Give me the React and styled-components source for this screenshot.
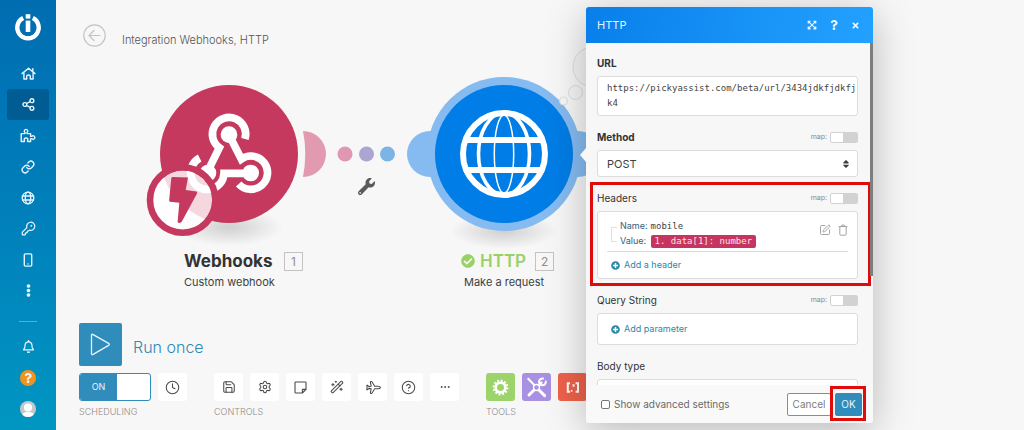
import React, { useState } from 'react';
import styled, { createGlobalStyle } from 'styled-components';
import {
  Link as LinkIcon, KeyRound, Clock, Save, Settings,
  WandSparkles, Plane, CircleQuestionMark, Ellipsis, SquarePen,
} from 'lucide-react';
import {
  FaRegBell, FaQuestion, FaTimes, FaExpandArrowsAlt, FaSort, FaPlusCircle,
  FaCheckCircle, FaWrench, FaEllipsisV,
} from 'react-icons/fa';

const GlobalStyle = createGlobalStyle`
  * { box-sizing: border-box; }
  body {
    margin: 0;
    background: #f7f7f7;
    color: #3c3f42;
    font-family: Inter, "Liberation Sans", sans-serif;
    font-size: 10px;
  }
  button, input, select, textarea { font: inherit; color: inherit; margin: 0; }
  button { border: 0; padding: 0; background: none; cursor: pointer; }
  svg { display: block; flex: none; }
`;

const Page = styled.div`
  display: flex;
  min-height: 100vh;
  overflow: hidden;
`;

/* ---------- Sidebar ---------- */
const Sidebar = styled.aside`
  flex: none;
  width: 56px;
  display: flex;
  flex-direction: column;
  align-items: center;
  padding-top: 13px;
  background: linear-gradient(#006db1, #0080bb 50%, #0096c2);
  color: #fff;
`;
const Logo = styled.a`
  color: inherit;
  margin-bottom: 17px;
`;
const Nav = styled.nav`
  display: flex;
  flex-direction: column;
`;
const NavItem = styled.a`
  display: flex;
  align-items: center;
  justify-content: center;
  width: 42px;
  height: 31px;
  border-radius: 3px;
  color: #e6f6ff;
  background: ${(p) => (p.$active ? '#005c93' : 'none')};
`;
const Divider = styled.hr`
  width: 18px;
  height: 1px;
  margin: 15px 0 9px;
  border: 0;
  background: #4fb0d6;
`;
const Disc = styled.span`
  display: flex;
  align-items: center;
  justify-content: center;
  width: 16px;
  height: 16px;
  border-radius: 50%;
  overflow: hidden;
  background: ${(p) => p.$color};
`;

/* ---------- Scenario canvas ---------- */
const Main = styled.main`
  position: relative;
  flex: 1;
  min-width: 0;
  display: flex;
  flex-direction: column;
`;
const TopBar = styled.header`
  display: flex;
  align-items: center;
  gap: 16px;
  height: 70px;
  padding-left: 27px;
`;
const BackButton = styled.button`
  display: flex;
  color: #c4c4c4;
`;
const ScenarioName = styled.h1`
  margin: 9px 0 0;
  font-size: 11px;
  line-height: 14px;
  font-weight: 300;
  color: #555;
`;
const Stage = styled.section`
  position: relative;
  height: 253px;
`;
const Drawing = styled.svg`
  position: absolute;
  left: 0;
  top: -70px;
`;
const NodeLabel = styled.div`
  position: absolute;
  left: ${(p) => p.$x}px;
  top: 181px;
  display: grid;
  grid-template-columns: auto auto;
  column-gap: 9px;
  row-gap: 4px;
  align-items: center;
  justify-items: start;
`;
const NodeName = styled.h2`
  display: flex;
  align-items: center;
  gap: 5px;
  margin: 0;
  font-size: 17px;
  line-height: 20px;
  font-weight: ${(p) => (p.$done ? 600 : 700)};
  color: ${(p) => (p.$done ? '#9ad167' : '#333')};
`;
const NodeNumber = styled.span`
  width: 19px;
  height: 19px;
  border: 1px solid #c3c3c3;
  font-size: 12px;
  line-height: 17px;
  text-align: center;
  color: #8e8e8e;
`;
const NodeKind = styled.p`
  margin: 0;
  font-size: 11px;
  line-height: 14px;
  white-space: nowrap;
  padding-left: ${(p) => (p.$wide ? '3px' : '0')};
  grid-column: ${(p) => (p.$wide ? '1 / 3' : '1')};
`;
const WrenchButton = styled.button`
  position: absolute;
  left: 302px;
  top: 108px;
  color: #5a5a5a;
`;

/* ---------- Bottom toolbar ---------- */
const Toolbar = styled.section`
  padding-left: 23px;
`;
const RunRow = styled.button`
  display: flex;
  align-items: center;
  gap: 11px;
  margin-bottom: 7px;
  font-size: 16px;
  line-height: 20px;
  font-weight: 300;
  color: #3089b5;
`;
const RunIcon = styled.span`
  display: flex;
  align-items: center;
  justify-content: center;
  width: 43px;
  height: 43px;
  border-radius: 2px;
  background: #2f8cbb;
`;
const RunText = styled.span`
  padding-top: 4px;
`;
const Groups = styled.div`
  display: flex;
  gap: 27px;
`;
const Group = styled.div`
  display: flex;
  flex-direction: column;
  gap: 5px;
`;
const GroupRow = styled.div`
  display: flex;
  gap: 7px;
`;
const GroupName = styled.span`
  font-size: 9px;
  line-height: 12px;
  font-weight: 300;
  color: #8b8b8b;
`;
const ToolButton = styled.button`
  display: flex;
  align-items: center;
  justify-content: center;
  width: 29px;
  height: 28px;
  border-radius: 3px;
  background: ${(p) => p.$color || '#fff'};
  color: ${(p) => (p.$color ? '#fff' : '#4a4a4a')};
`;
const Schedule = styled.button`
  display: flex;
  width: 72px;
  height: 28px;
  border: 1px solid #2f8cbb;
  border-radius: 3px;
  overflow: hidden;
  background: #fff;
`;
const ScheduleOn = styled.span`
  width: 37px;
  height: 100%;
  font-size: 9px;
  line-height: 26px;
  text-align: center;
  background: #2f8cbb;
  color: #e9f5fb;
`;

/* ---------- Module settings panel ---------- */
const Panel = styled.section`
  position: absolute;
  left: 530px;
  top: 7px;
  bottom: 7px;
  width: 287px;
  display: flex;
  flex-direction: column;
  border-radius: 3px;
  background: #f7f7f7;
  box-shadow: 0 8px 40px rgba(0, 0, 0, 0.26);
`;
const Pointer = styled.svg`
  position: absolute;
  left: -6px;
  top: 141px;
`;
const PanelHeader = styled.header`
  display: flex;
  align-items: center;
  flex: none;
  height: 36px;
  padding: 0 13px 0 11px;
  border-radius: 3px 3px 0 0;
  background: linear-gradient(100deg, #087fea, #23a1ff);
  color: #e8f5ff;
`;
const PanelTitle = styled.h2`
  flex: 1;
  margin: 0;
  font-size: 11px;
  line-height: 14px;
  font-weight: 400;
`;
const HeaderButtons = styled.div`
  display: flex;
  align-items: center;
  gap: 12px;
`;
const PanelBody = styled.div`
  position: relative;
  flex: 1 1 0;
  min-height: 0;
  display: flex;
  flex-direction: column;
  gap: 13px;
  padding: 12px 15px 0 11px;
  overflow: hidden;
`;
const ScrollThumb = styled.div`
  position: absolute;
  top: 0;
  right: 0;
  width: 3px;
  height: 68%;
  background: #7e7e7e;
`;
const Field = styled.div`
  position: relative;
  flex: none;
`;
const FieldHead = styled.div`
  display: flex;
  align-items: center;
  justify-content: space-between;
  height: 16px;
  margin-bottom: 5px;
`;
const FieldLabel = styled.label`
  font-size: 10px;
  line-height: 16px;
  font-weight: ${(p) => (p.$required ? 700 : 400)};
  color: #333;
`;
const MapLabel = styled.label`
  display: flex;
  align-items: center;
  gap: 3px;
  font-size: 7px;
  line-height: 12px;
  color: #8a8a8a;
`;
const MapSwitch = styled.input`
  appearance: none;
  width: 28px;
  height: 11px;
  border: 1px solid #d2d2d2;
  border-radius: 2px;
  background: linear-gradient(90deg, #fff 12px, #d2d2d2 12px);
`;
const UrlInput = styled.textarea`
  display: block;
  width: 100%;
  height: 40px;
  padding: 4px 0 4px 9px;
  border: 1px solid #dcdcdc;
  border-radius: 3px;
  outline: 0;
  resize: none;
  overflow: hidden;
  background: #fff;
  color: #444;
  font-family: "DejaVu Sans Mono", monospace;
  font-size: 9px;
  line-height: 15px;
  word-break: break-all;
`;
const SelectWrap = styled.div`
  display: grid;
  align-items: center;
  & > * { grid-area: 1 / 1; }
  & > svg { justify-self: end; margin-right: 7px; pointer-events: none; }
`;
const Select = styled.select`
  appearance: none;
  width: 100%;
  height: 27px;
  padding: 0 9px;
  border: 1px solid #dcdcdc;
  border-radius: 3px;
  background: #fff;
  font-size: 11px;
  line-height: 16px;
`;
const Box = styled.div`
  padding: ${(p) => (p.$list ? '7px 9px 0' : '8px 9px')};
  border: 1px solid #dcdcdc;
  border-radius: 3px;
  background: #fff;
`;
const HeaderItem = styled.div`
  display: flex;
  align-items: center;
  padding-bottom: 2px;
  border-bottom: 1px solid #dcdcdc;
`;
const Bracket = styled.span`
  width: 6px;
  height: 15px;
  margin: 0 3px 0 4px;
  border: 1px solid #e0e0e0;
  border-right: 0;
`;
const Pairs = styled.dl`
  flex: 1;
  display: grid;
  grid-template-columns: auto 1fr;
  grid-auto-rows: 15px;
  column-gap: 3px;
  margin: 0;
  font-size: 9px;
  line-height: 14px;
`;
const PairName = styled.dt`
  color: #35607a;
`;
const PairValue = styled.dd`
  margin: 0;
  font-family: "DejaVu Sans Mono", monospace;
`;
const Token = styled.span`
  display: inline-block;
  padding: 0 4px;
  border-radius: 2px;
  background: #c5355f;
  color: #fbe3ea;
  line-height: 13px;
`;
const ItemActions = styled.div`
  display: flex;
  align-items: center;
  gap: 7px;
  padding-bottom: 8px;
  color: #a4a4a4;
`;
const AddButton = styled.button`
  display: flex;
  align-items: center;
  gap: 4px;
  height: ${(p) => (p.$list ? '26px' : '14px')};
  padding-left: 4px;
  font-size: 9px;
  line-height: 14px;
  color: #2c87ab;
`;
const PanelFooter = styled.footer`
  display: flex;
  align-items: center;
  justify-content: space-between;
  flex: none;
  height: 38px;
  padding: 0 11px 0 15px;
  border-radius: 0 0 3px 3px;
  background: #f9f9f9;
`;
const Advanced = styled.label`
  display: flex;
  align-items: center;
  gap: 4px;
  font-size: 10px;
  line-height: 14px;
  color: #6a6a6a;
`;
const Tick = styled.input`
  appearance: none;
  width: 9px;
  height: 9px;
  border: 1px solid #777;
  border-radius: 2px;
  background: #fff;
`;
const FooterButtons = styled.div`
  display: flex;
  gap: 4px;
`;
const FooterButton = styled.button`
  width: ${(p) => (p.$primary ? '27px' : '44px')};
  height: 23px;
  border: 1px solid ${(p) => (p.$primary ? '#2f8cbb' : '#8c8c8c')};
  border-radius: 2px;
  background: ${(p) => (p.$primary ? '#2f8cbb' : '#fff')};
  color: ${(p) => (p.$primary ? '#e9f5fb' : '#7c7c7c')};
  font-size: 10px;
  line-height: 14px;
`;
const OkSlot = styled.div`
  position: relative;
`;
const Highlight = styled.div`
  position: absolute;
  inset: ${(p) => p.$inset};
  border: 3px solid #e00b0b;
  pointer-events: none;
`;

/* ---------- Icons ---------- */
const stroke = { fill: 'none', stroke: 'currentColor', strokeLinecap: 'round', strokeLinejoin: 'round' };

const LogoIcon = () => (
  <svg width="28" height="28" viewBox="0 0 28 28" fill="none" stroke="#fff">
    <path d="M9.2 5 A10.7 10.7 0 1 0 18.8 5" strokeWidth="4.4" />
    <path d="M14 7.6 V19" strokeWidth="4.6" />
    <path d="M14 1.2 V5.6" strokeWidth="4.6" />
  </svg>
);
const HomeIcon = () => (
  <svg width="15" height="13" viewBox="0 0 15 13" {...stroke} strokeWidth="1.4">
    <path d="M1 6.6 L7.5 1.2 L14 6.6 M11.8 1.6 V4.4" />
    <path d="M2.9 6 V12 H5.7 V9 Q5.7 8 7.5 8 Q9.3 8 9.3 9 V12 H12.1 V6" />
  </svg>
);
const ShareIcon = () => (
  <svg width="13" height="13" viewBox="0 0 13 13" {...stroke} strokeWidth="1.4">
    <circle cx="2.900" cy="6.500" r="1.900" />
    <circle cx="9.900" cy="2.700" r="1.900" />
    <circle cx="9.900" cy="10.300" r="1.900" />
    <path d="M4.7 5.5 L8.1 3.7 M4.7 7.5 L8.1 9.3" />
  </svg>
);
const PuzzleIcon = () => (
  <svg width="16" height="15" viewBox="0 0 16 15" {...stroke} strokeWidth="1.4">
    <path d="M1.2 13.5 V5.6 H5 V4.6 C3.6 3.4 4.4 1.4 6 1.4 C7.6 1.4 8.4 3.4 7 4.600 V5.6 H10.6 V8.4 H11.8 C12.8 7 14.800 7.800 14.800 9.500 C14.800 11.200 12.800 12 11.800 10.600 H10.600 V13.500 H7.600 V12.200 C8.400 10.800 7.200 10 6 10 C4.800 10 3.600 10.800 4.400 12.200 V13.500 Z" />
  </svg>
);
const GlobeIcon = () => (
  <svg width="14" height="14" viewBox="0 0 14 14" {...stroke} strokeWidth="1.3">
    <circle cx="7" cy="7" r="5.8" />
    <ellipse cx="7" cy="7" rx="2.7" ry="5.8" />
    <path d="M1.5 5 H12.5 M1.5 9 H12.5" />
  </svg>
);
const DeviceIcon = () => (
  <svg width="10" height="14" viewBox="0 0 10 14" {...stroke} strokeWidth="1.4">
    <rect x="1.300" y=".9" width="7.400" height="12.200" rx="1" />
    <path d="M4.900 10.900 H5.100" />
  </svg>
);
const TrashIcon = () => (
  <svg width="10" height="12" viewBox="0 0 10 12" {...stroke} strokeWidth="1">
    <path d="M1 2.500 H9 M3.400 2.300 L4 1 H6 L6.600 2.300 M1.800 2.700 V10.200 Q1.800 11.200 2.800 11.200 H7.200 Q8.200 11.200 8.200 10.200 V2.700" />
  </svg>
);
const PersonIcon = () => (
  <svg width="16" height="16" viewBox="0 0 16 16" fill="#fff">
    <circle cx="8" cy="6.6" r="4" />
    <path d="M2 16 C2 11.6 5 11 8 11 C11 11 14 11.6 14 16 Z" />
  </svg>
);
const BackIcon = () => (
  <svg width="23" height="23" viewBox="0 0 23 23" {...stroke} strokeWidth="1.2">
    <circle cx="11.5" cy="11.5" r="10.7" />
    <path d="M17 11.5 H6.5 M11 6.5 L6 11.5 L11 16.5" />
  </svg>
);
const PlayIcon = () => (
  <svg width="21" height="23" viewBox="0 0 21 23" fill="none" stroke="#e6f5fc" strokeWidth="1.3" strokeLinejoin="round">
    <path d="M1.5 2.4 Q1.5 .6 3.2 1.6 L18.6 10.4 Q20 11.4 18.6 12.4 L3.2 21.4 Q1.5 22.2 1.5 20.4 Z" />
  </svg>
);
const NoteIcon = () => (
  <svg width="13" height="13" viewBox="0 0 13 13" {...stroke} strokeWidth="1.1">
    <path d="M1.8 1 H11.2 Q12 1 12 1.8 V8.4 L8.4 12 H1.8 Q1 12 1 11.2 V1.8 Q1 1 1.8 1 Z M12 8.4 H8.4 V12" />
  </svg>
);
const GearToolIcon = () => (
  <svg width="17" height="17" viewBox="0 0 18 18" fill="none" stroke="#fff">
    <circle cx="9" cy="9" r="7.4" strokeWidth="2" strokeDasharray="1.95 1.93" />
    <circle cx="9" cy="9" r="5.2" strokeWidth="3" />
  </svg>
);
const CrossToolIcon = () => (
  <svg width="21" height="21" viewBox="0 0 21 21" fill="none" stroke="#fff" strokeLinecap="round">
    <path d="M2.2 1.8 L8 7.8" strokeWidth="2" />
    <path d="M13.2 13.2 L18.6 18.6" strokeWidth="3" />
    <path d="M3 18 L7.8 13.2" strokeWidth="3" />
    <path d="M13 8 L15.4 5.6" strokeWidth="2.4" />
    <path d="M17 1.6 A3.4 3.4 0 1 0 19.8 4.6" strokeWidth="2" />
    <circle cx="10.5" cy="10.5" r="3" strokeWidth="1.3" />
  </svg>
);
const PatternIcon = () => (
  <svg width="14" height="11" viewBox="0 0 14 11" fill="none" stroke="#fff">
    <path d="M4 1.200 H1.800 V9.800 H4 M9.600 1.200 H12 V9.800 H9.600" strokeWidth="2" />
    <path d="M4.800 8.800 H6.400" strokeWidth="1.800" />
    <path d="M7.600 2 V5 M6.300 2.700 L8.900 4.200 M8.900 2.700 L6.300 4.200" strokeWidth=".8" />
  </svg>
);

/* The two modules and the link between them, in page units. */
const ScenarioDrawing = () => (
  <Drawing width="560" height="320" viewBox="56 0 560 320" aria-hidden="true">
    <defs>
      <radialGradient id="shade">
        <stop offset="0" stopColor="#000" stopOpacity=".16" />
        <stop offset="1" stopColor="#000" stopOpacity="0" />
      </radialGradient>
    </defs>
    <ellipse cx="229" cy="227" rx="54" ry="19" fill="url(#shade)" />
    <ellipse cx="504" cy="231" rx="54" ry="18" fill="url(#shade)" />

    <circle cx="229" cy="154" r="69" fill="#c5395f" />
    <g transform="translate(140 70) scale(.33333)">
      <g fill="none" stroke="#fff" strokeWidth="23">
        <path d="M315 207 A50 50 0 1 0 238 233 L206 298" />
        <path d="M296 342 A50 50 0 1 0 304 267 L270 200" />
        <path d="M179 264 A50 50 0 1 0 252 310 L330 310" />
      </g>
      <g fill="#fff">
        <circle cx="267" cy="194" r="25" />
        <circle cx="332" cy="309" r="25" />
        <circle cx="204" cy="309" r="25" />
      </g>
    </g>
    <circle cx="182.700" cy="200" r="29.500" fill="#fff" fillOpacity=".8" />
    <circle cx="182.700" cy="200" r="32.700" fill="none" stroke="#c5395f" strokeWidth="6.600" />
    <path d="M172.500 177 L188 177.400 L185.700 190 L196.500 191.600 Q197.600 192 197 193.400 L181.600 222 Q179 224 177.600 222 L179.300 202.700 L170 201.800 Q169 201.600 169.200 200 L171.300 178.200 Q171.500 177 172.500 177 Z" fill="#c5395f" />

    <path d="M303 131 A23 23 0 0 1 303 177 Q307.500 154 303 131 Z" fill="#e29ab1" />
    <circle cx="345" cy="154" r="7.500" fill="#e097b2" />
    <circle cx="366.500" cy="154" r="7.500" fill="#aaa5d1" />
    <circle cx="387.500" cy="154" r="7.500" fill="#7db4e6" />

    <circle cx="593" cy="67" r="20" fill="#f3f3f3" stroke="#dcdcdc" />
    <circle cx="430" cy="154" r="23" fill="#85bbf1" />
    <circle cx="578" cy="154" r="23" fill="#85bbf1" />
    <circle cx="504" cy="154" r="77" fill="#85bbf1" />
    <circle cx="504" cy="154" r="69" fill="#007de6" />
    <circle cx="575.500" cy="92.500" r="7" fill="#f5f5f5" stroke="#dcdcdc" />
    <circle cx="563.500" cy="101" r="4" fill="#f8f8f8" stroke="#dcdcdc" />
    <g fill="none" stroke="#fff">
      <circle cx="504" cy="154" r="41" strokeWidth="6" />
      <ellipse cx="504" cy="154" rx="25.500" ry="41" strokeWidth="3.600" />
      <ellipse cx="504" cy="154" rx="9.700" ry="39" strokeWidth="1.500" />
      <path d="M464 140 H544 M464 170 H544" strokeWidth="6" />
    </g>
  </Drawing>
);

const sideItems = [
  ['Home', <HomeIcon />],
  ['Scenarios', <ShareIcon />],
  ['Templates', <PuzzleIcon />],
  ['Connections', <LinkIcon size={14} strokeWidth={2.4} />],
  ['Webhooks', <GlobeIcon />],
  ['Keys', <KeyRound size={15} />],
  ['Devices', <DeviceIcon />],
  ['More', <FaEllipsisV size={13} />],
];
const controls = [
  ['Save', <Save size={14} strokeWidth={1.8} />],
  ['Scenario settings', <Settings size={14} strokeWidth={1.8} />],
  ['Notes', <NoteIcon />],
  ['Auto-align', <WandSparkles size={14} strokeWidth={1.8} />],
  ['Explain flow', <Plane size={15} strokeWidth={1.7} transform="rotate(45)" />],
  ['Help', <CircleQuestionMark size={15} strokeWidth={1.7} />],
  ['More', <Ellipsis size={12} strokeWidth={2} />],
];

const MapToggle = ({ field }) => (
  <MapLabel>
    map:
    <MapSwitch type="checkbox" aria-label={`Map ${field}`} />
  </MapLabel>
);

export default function App() {
  const [url, setUrl] = useState('https://pickyassist.com/beta/url/3434jdkfjdkfjk4');
  return (
    <>
      <GlobalStyle />
      <Page>
        <Sidebar>
          <Logo href="#" aria-label="Dashboard"><LogoIcon /></Logo>
          <Nav aria-label="Main">
            {sideItems.map(([name, icon]) => (
              <NavItem key={name} href="#" aria-label={name} $active={name === 'Scenarios'}>{icon}</NavItem>
            ))}
          </Nav>
          <Divider />
          <Nav aria-label="Account">
            <NavItem href="#" aria-label="Notifications"><FaRegBell size={13} /></NavItem>
            <NavItem href="#" aria-label="Help"><Disc $color="#f0941f"><FaQuestion size={10} /></Disc></NavItem>
            <NavItem href="#" aria-label="Profile"><Disc $color="#c6c9cb"><PersonIcon /></Disc></NavItem>
          </Nav>
        </Sidebar>

        <Main>
          <TopBar>
            <BackButton aria-label="Back"><BackIcon /></BackButton>
            <ScenarioName>Integration Webhooks, HTTP</ScenarioName>
          </TopBar>

          <Stage>
            <ScenarioDrawing />
            <WrenchButton aria-label="Set up a filter"><FaWrench size={17} /></WrenchButton>
            <NodeLabel $x={128}>
              <NodeName>Webhooks</NodeName>
              <NodeNumber>1</NodeNumber>
              <NodeKind>Custom webhook</NodeKind>
            </NodeLabel>
            <NodeLabel $x={405}>
              <NodeName $done><FaCheckCircle size={14} />HTTP</NodeName>
              <NodeNumber>2</NodeNumber>
              <NodeKind $wide>Make a request</NodeKind>
            </NodeLabel>
          </Stage>

          <Toolbar>
            <RunRow><RunIcon><PlayIcon /></RunIcon><RunText>Run once</RunText></RunRow>
            <Groups>
              <Group>
                <GroupRow>
                  <Schedule role="switch" aria-checked="true"><ScheduleOn>ON</ScheduleOn></Schedule>
                  <ToolButton aria-label="Schedule"><Clock size={15} strokeWidth={1.7} /></ToolButton>
                </GroupRow>
                <GroupName>SCHEDULING</GroupName>
              </Group>
              <Group>
                <GroupRow>
                  {controls.map(([name, icon]) => <ToolButton key={name} aria-label={name}>{icon}</ToolButton>)}
                </GroupRow>
                <GroupName>CONTROLS</GroupName>
              </Group>
              <Group>
                <GroupRow>
                  <ToolButton aria-label="Flow control" $color="#9dd36b"><GearToolIcon /></ToolButton>
                  <ToolButton aria-label="Tools" $color="#a891e3"><CrossToolIcon /></ToolButton>
                  <ToolButton aria-label="Text parser" $color="#ee624b"><PatternIcon /></ToolButton>
                </GroupRow>
                <GroupName>TOOLS</GroupName>
              </Group>
            </Groups>
          </Toolbar>

          <Panel aria-label="HTTP">
            <Pointer width="6" height="14" viewBox="0 0 6 14" fill="#f7f7f7"><path d="M6 0 L0 7 L6 14 Z" /></Pointer>
            <PanelHeader>
              <PanelTitle>HTTP</PanelTitle>
              <HeaderButtons>
                <button aria-label="Expand"><FaExpandArrowsAlt size={10} /></button>
                <button aria-label="Help"><FaQuestion size={10} /></button>
                <button aria-label="Close"><FaTimes size={9} /></button>
              </HeaderButtons>
            </PanelHeader>
            <PanelBody>
              <Field>
                <FieldHead><FieldLabel $required htmlFor="url">URL</FieldLabel></FieldHead>
                <UrlInput id="url" spellCheck={false} value={url} onChange={(e) => setUrl(e.target.value)} />
              </Field>
              <Field>
                <FieldHead><FieldLabel $required htmlFor="method">Method</FieldLabel><MapToggle field="Method" /></FieldHead>
                <SelectWrap>
                  <Select id="method" defaultValue="POST">
                    <option>GET</option>
                    <option>POST</option>
                    <option>PUT</option>
                  </Select>
                  <FaSort size={10} />
                </SelectWrap>
              </Field>
              <Field>
                <FieldHead><FieldLabel as="span">Headers</FieldLabel><MapToggle field="Headers" /></FieldHead>
                <Box $list>
                  <HeaderItem>
                    <Bracket />
                    <Pairs>
                      <PairName>Name:</PairName>
                      <PairValue>mobile</PairValue>
                      <PairName>Value:</PairName>
                      <PairValue><Token>1. data[1]: number</Token></PairValue>
                    </Pairs>
                    <ItemActions>
                      <button aria-label="Edit header"><SquarePen size={12} /></button>
                      <button aria-label="Delete header"><TrashIcon /></button>
                    </ItemActions>
                  </HeaderItem>
                  <AddButton $list><FaPlusCircle size={9} />Add a header</AddButton>
                </Box>
                <Highlight $inset="-8px -13px -7px -7px" />
              </Field>
              <Field>
                <FieldHead><FieldLabel as="span">Query String</FieldLabel><MapToggle field="Query String" /></FieldHead>
                <Box><AddButton><FaPlusCircle size={9} />Add parameter</AddButton></Box>
              </Field>
              <Field>
                <FieldHead><FieldLabel htmlFor="body-type">Body type</FieldLabel></FieldHead>
                <Select id="body-type" defaultValue=""><option value="" /><option>Raw</option></Select>
              </Field>
              <ScrollThumb />
            </PanelBody>
            <PanelFooter>
              <Advanced><Tick type="checkbox" />Show advanced settings</Advanced>
              <FooterButtons>
                <FooterButton>Cancel</FooterButton>
                <OkSlot>
                  <FooterButton $primary>OK</FooterButton>
                  <Highlight $inset="-7px -4px -5px -5px" />
                </OkSlot>
              </FooterButtons>
            </PanelFooter>
          </Panel>
        </Main>
      </Page>
    </>
  );
}
